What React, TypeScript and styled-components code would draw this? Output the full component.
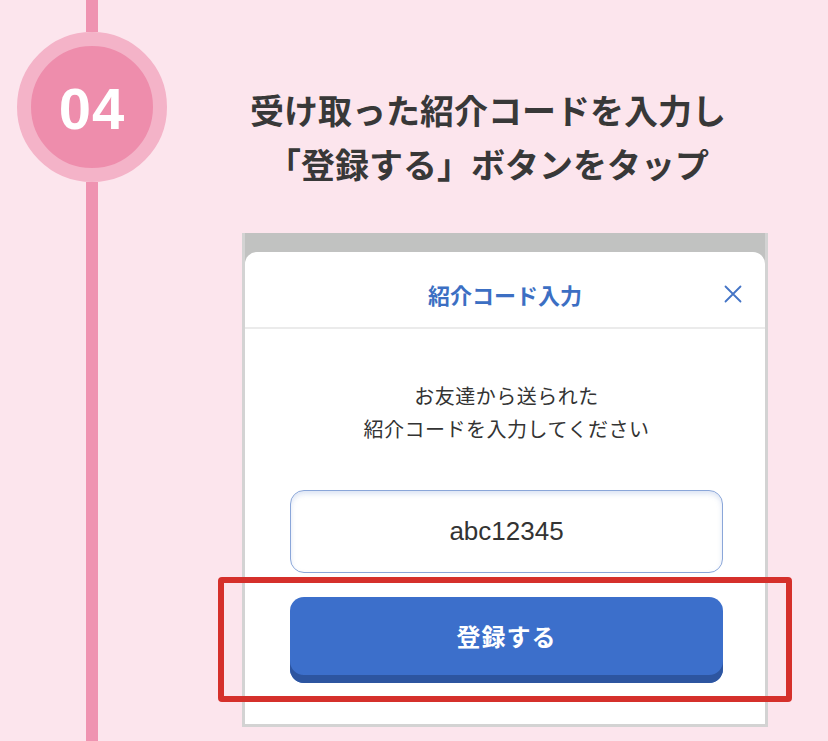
import React from "react";
import styled, { createGlobalStyle } from "styled-components";

const Global = createGlobalStyle`
  html, body { margin: 0; padding: 0; }
  body {
    background: #fce5ed;
    font-family: "Noto Sans CJK JP", "Noto Sans", sans-serif;
  }
`;

const Page = styled.div`
  display: flex;
  width: 828px;
  min-height: 741px;
  background: #fce5ed;
  overflow: hidden;
`;

const Timeline = styled.div`
  width: 184px;
  flex: none;
  display: flex;
  flex-direction: column;
  align-items: center;
`;

const Line = styled.div<{ $h?: number }>`
  width: 12px;
  background: #ef93b1;
  ${(p) => (p.$h ? `height: ${p.$h}px; flex: none;` : `flex: 1;`)}
`;

const StepCircle = styled.div`
  box-sizing: border-box;
  width: 150px;
  height: 150px;
  flex: none;
  border-radius: 50%;
  border: 14px solid #f4b3c8;
  background: #ee8dac;
  display: flex;
  align-items: center;
  justify-content: center;
  color: #fff;
  font-family: "Liberation Sans", "Noto Sans", sans-serif;
  font-weight: 700;
  font-size: 58px;
  letter-spacing: 1px;
  padding-top: 2px;
`;

const Content = styled.div`
  width: 622px;
  display: flex;
  flex-direction: column;
  padding-top: 83px;
`;

const Title = styled.h2`
  margin: 0;
  padding-right: 14px;
  text-align: center;
  font-size: 34px;
  line-height: 54px;
  font-weight: 700;
  color: #383838;
`;

const Frame = styled.div`
  margin: 42px 0 0 58px;
  width: 526px;
  box-sizing: border-box;
  background: #c1c2c1;
  border: 3px solid #d3d3d3;
  border-top: none;
  padding-top: 19px;
`;

const Modal = styled.div`
  background: #fff;
  border-radius: 12px 12px 0 0;
  display: flex;
  flex-direction: column;
`;

const Header = styled.div`
  height: 77px;
  box-sizing: border-box;
  padding-top: 8px;
  display: grid;
  grid-template-columns: 1fr auto 1fr;
  align-items: center;
  border-bottom: 2px solid #ebebeb;
`;

const HeaderTitle = styled.div`
  grid-column: 2;
  font-size: 22px;
  font-weight: 700;
  color: #3c6fc3;
`;

const CloseButton = styled.button`
  grid-column: 3;
  justify-self: end;
  margin-right: 23px;
  border: none;
  background: none;
  padding: 0;
  width: 18px;
  height: 18px;
  display: flex;
`;

const Body = styled.div`
  display: flex;
  flex-direction: column;
  align-items: stretch;
  padding: 50px 42px 41px 45px;
`;

const Message = styled.p`
  margin: 0;
  text-align: center;
  font-size: 20px;
  line-height: 33px;
  color: #333;
  letter-spacing: 0.5px;
`;

const CodeInput = styled.input`
  margin-top: 45px;
  height: 83px;
  box-sizing: border-box;
  width: 100%;
  border: 1.5px solid #8aa6d9;
  border-radius: 14px;
  box-shadow: inset 0 3px 5px rgba(120, 150, 210, 0.25);
  text-align: center;
  font-family: "Liberation Sans", "Noto Sans", sans-serif;
  font-size: 26px;
  color: #333;
  outline: none;
  background: #fff;
  padding: 0;
`;

const ButtonArea = styled.div`
  position: relative;
  margin-top: 24px;
`;

const SubmitButton = styled.button`
  width: 100%;
  height: 86px;
  box-sizing: border-box;
  border: none;
  border-radius: 14px;
  background: #3c6fcb;
  box-shadow: inset 0 -8px 0 #2d55a0;
  padding: 0 0 10px;
  color: #fff;
  font-family: "Noto Sans CJK JP", "Noto Sans", sans-serif;
  font-size: 24px;
  font-weight: 700;
  letter-spacing: 1px;
`;

const Highlight = styled.div`
  position: absolute;
  top: -20px;
  bottom: -19px;
  left: -72px;
  right: -69px;
  border: 6px solid #d5302b;
  border-radius: 4px;
  pointer-events: none;
`;

export default function App() {
  return (
    <>
      <Global />
      <Page>
        <Timeline>
          <Line $h={32} />
          <StepCircle>04</StepCircle>
          <Line />
        </Timeline>
        <Content>
          <Title>
            受け取った紹介コードを入力し
            <br />
            「登録する」ボタンをタップ
          </Title>
          <Frame>
            <Modal>
              <Header>
                <HeaderTitle>紹介コード入力</HeaderTitle>
                <CloseButton aria-label="閉じる">
                  <svg width="18" height="18" viewBox="0 0 18 18">
                    <path
                      d="M1.5 1.5 L16.5 16.5 M16.5 1.5 L1.5 16.5"
                      stroke="#4474c6"
                      strokeWidth="1.8"
                      strokeLinecap="round"
                      fill="none"
                    />
                  </svg>
                </CloseButton>
              </Header>
              <Body>
                <Message>
                  お友達から送られた
                  <br />
                  紹介コードを入力してください
                </Message>
                <CodeInput readOnly defaultValue="abc12345" />
                <ButtonArea>
                  <SubmitButton>登録する</SubmitButton>
                  <Highlight />
                </ButtonArea>
              </Body>
            </Modal>
          </Frame>
        </Content>
      </Page>
    </>
  );
}
